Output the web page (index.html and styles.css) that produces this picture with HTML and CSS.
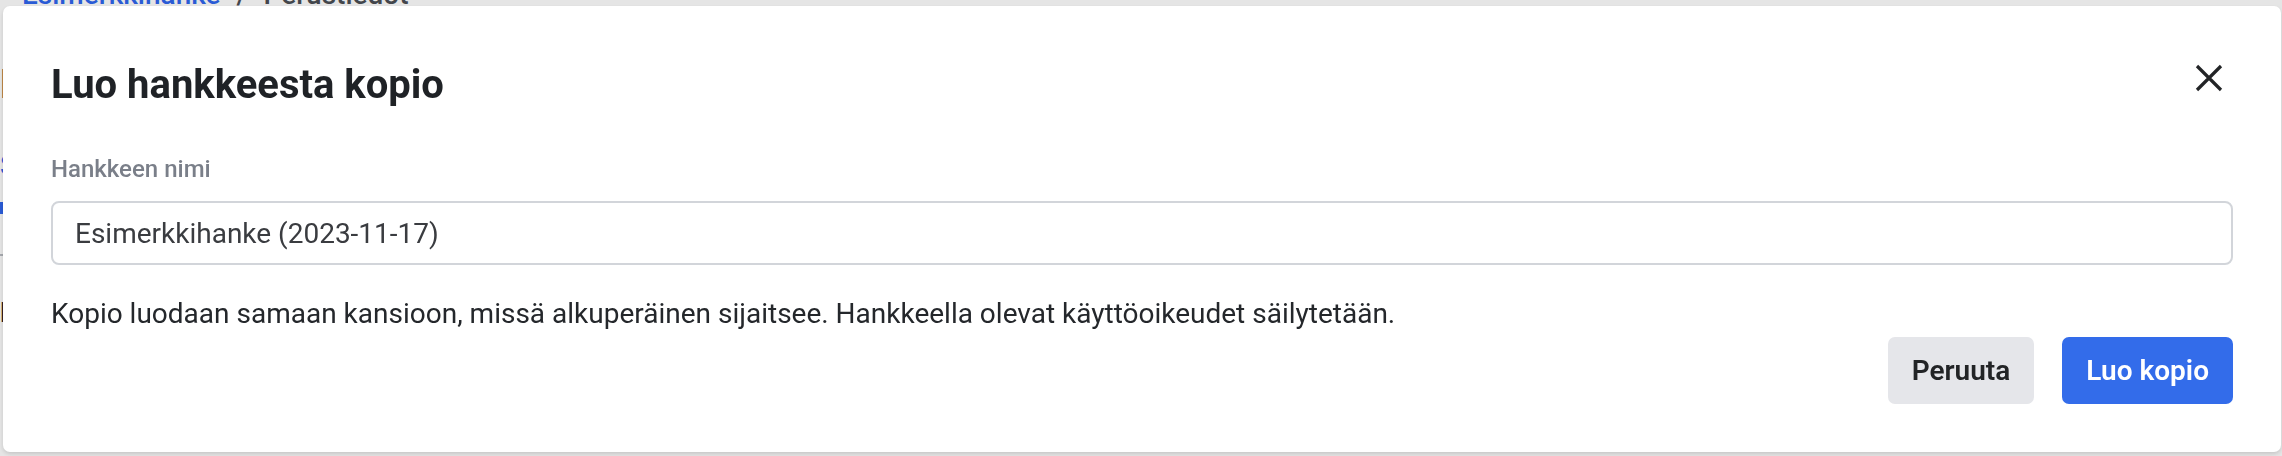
FILE: index.html
```html
<!DOCTYPE html>
<html lang="fi">
<head>
<meta charset="utf-8">
<title>Luo hankkeesta kopio</title>
<link rel="stylesheet" href="styles.css">
</head>
<body>
<div class="page">
  <nav class="crumbs">
    <a class="crumb-link" href="#">Esimerkkihanke</a>
    <span class="crumb-sep">/</span>
    <span class="crumb-current">Perustiedot</span>
  </nav>
  <div class="page-body">
    <h1 class="page-title">Perustiedot</h1>
    <a class="page-link" href="#">Siirry hankkeeseen</a>
    <span class="page-tab"></span>
    <hr class="page-rule">
    <p class="page-text">Kuvaus</p>
  </div>
</div>

<div class="backdrop">
  <div class="dialog" role="dialog" aria-labelledby="dialog-title">
    <div class="dialog-head">
      <h2 class="dialog-title" id="dialog-title">Luo hankkeesta kopio</h2>
      <button class="close" type="button" aria-label="Sulje">
        <svg width="28" height="28" viewBox="0 0 28 28" aria-hidden="true">
          <path d="M2 2 L26 26 M26 2 L2 26" stroke="#222426" stroke-width="3.2" fill="none"/>
        </svg>
      </button>
    </div>
    <label class="field-label" for="name">Hankkeen nimi</label>
    <input class="field-input" id="name" type="text" value="Esimerkkihanke (2023-11-17)">
    <p class="note">Kopio luodaan samaan kansioon, missä alkuperäinen sijaitsee. Hankkeella olevat käyttöoikeudet säilytetään.</p>
    <div class="actions">
      <button class="btn btn-secondary" type="button">Peruuta</button>
      <button class="btn btn-primary" type="button">Luo kopio</button>
    </div>
  </div>
</div>
</body>
</html>
```

FILE: styles.css
```css
* {
  box-sizing: border-box;
}

html, body {
  margin: 0;
  height: 100%;
}

body {
  font-family: Roboto, "Liberation Sans", sans-serif;
  background: #ffffff;
  overflow: hidden;
}

/* page underneath the dialog */
.page {
  padding: 0 22px;
}

.crumbs {
  display: flex;
  align-items: baseline;
  gap: 16px;
  margin-top: -21px;
  font-size: 28px;
  line-height: 32px;
  font-weight: 500;
}

.crumb-link {
  color: #2f66ee;
  text-decoration: none;
}

.crumb-sep,
.crumb-current {
  color: #4b4f55;
}

.page-body {
  margin-left: -22px;
  padding-top: 50px;
}

.page-title {
  margin: 0;
  font-size: 40px;
  line-height: 48px;
  color: #1f2328;
}

.page-link {
  display: block;
  margin-top: 40px;
  font-size: 28px;
  color: #2f66ee;
  text-decoration: none;
}

.page-tab {
  display: block;
  width: 40px;
  height: 12px;
  margin-top: 20px;
  background: #2f66ee;
}

.page-rule {
  margin: 40px 0 0;
  border: 0;
  border-top: 2px solid #b9bcc2;
}

.page-text {
  margin: 40px 0 0;
  font-size: 28px;
  font-weight: 700;
  color: #1f2328;
}

/* dim layer and dialog */
.backdrop {
  position: fixed;
  inset: 0;
  background: rgba(0, 0, 0, 0.1);
  padding: 6px 1px 4px 3px;
}

.dialog {
  display: flex;
  flex-direction: column;
  background: #ffffff;
  border-radius: 7px;
  padding: 48px;
  box-shadow: 0 2px 4px rgba(0, 0, 0, 0.14);
}

.dialog-head {
  display: flex;
  justify-content: space-between;
  align-items: flex-start;
}

.dialog-title {
  margin: 3px 0 0;
  font-size: 40px;
  line-height: 56px;
  font-weight: 700;
  color: #1f2226;
}

.close {
  width: 48px;
  height: 48px;
  padding: 0;
  border: 0;
  background: transparent;
  display: flex;
  align-items: center;
  justify-content: center;
  cursor: pointer;
}

.field-label {
  margin-top: 40px;
  font-size: 24px;
  line-height: 32px;
  font-weight: 500;
  color: #7a7f89;
}

.field-input {
  margin-top: 16px;
  width: 100%;
  height: 64px;
  padding: 0 22px;
  border: 2px solid #d2d5da;
  border-radius: 8px;
  font-family: Roboto, "Liberation Sans", sans-serif;
  font-size: 28px;
  color: #3a3c40;
  background: #ffffff;
  outline: none;
}

.note {
  margin: 29px 0 0;
  font-size: 28px;
  line-height: 40px;
  color: #24272b;
}

.actions {
  display: flex;
  justify-content: flex-end;
  gap: 28px;
  margin-top: 3px;
}

.btn {
  height: 67px;
  padding: 0 24px;
  border: 0;
  border-radius: 7px;
  font-family: Roboto, "Liberation Sans", sans-serif;
  font-size: 28px;
  font-weight: 600;
  cursor: pointer;
}

.btn-secondary {
  background: #e5e6ea;
  color: #222426;
}

.btn-primary {
  background: #336cea;
  color: #ffffff;
}
```
